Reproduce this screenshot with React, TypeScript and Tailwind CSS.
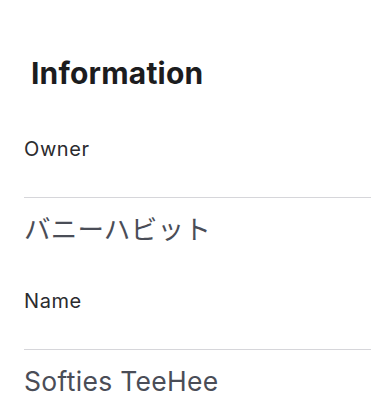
export default function App() {
  const fields = [
    { label: "Owner", value: "バニーハビット" },
    { label: "Name", value: "Softies TeeHee" },
  ];
  return (
    <div
      className="min-h-[420px] bg-white pl-6 pt-[55px]"
      style={{ fontFamily: 'Inter, "Noto Sans CJK JP", sans-serif' }}
    >
      <h2 className="pl-[7px] text-[30px] font-bold leading-[36px] tracking-[0.2px] text-[#1c1c1e]">
        Information
      </h2>
      <div className="mt-[46px] flex flex-col">
        {fields.map((f, i) => (
          <div key={f.label} className={i > 0 ? "mt-[44px]" : ""}>
            <p className="text-[20px] leading-6 tracking-[0.6px] text-[#2b2b2e]">{f.label}</p>
            <div className="mt-[36px] h-px bg-[#d6d6da]" />
            <p className="pt-[15px] text-[26.5px] leading-8 tracking-[0.3px] text-[#4a4d57]">
              {f.value}
            </p>
          </div>
        ))}
      </div>
    </div>
  );
}
